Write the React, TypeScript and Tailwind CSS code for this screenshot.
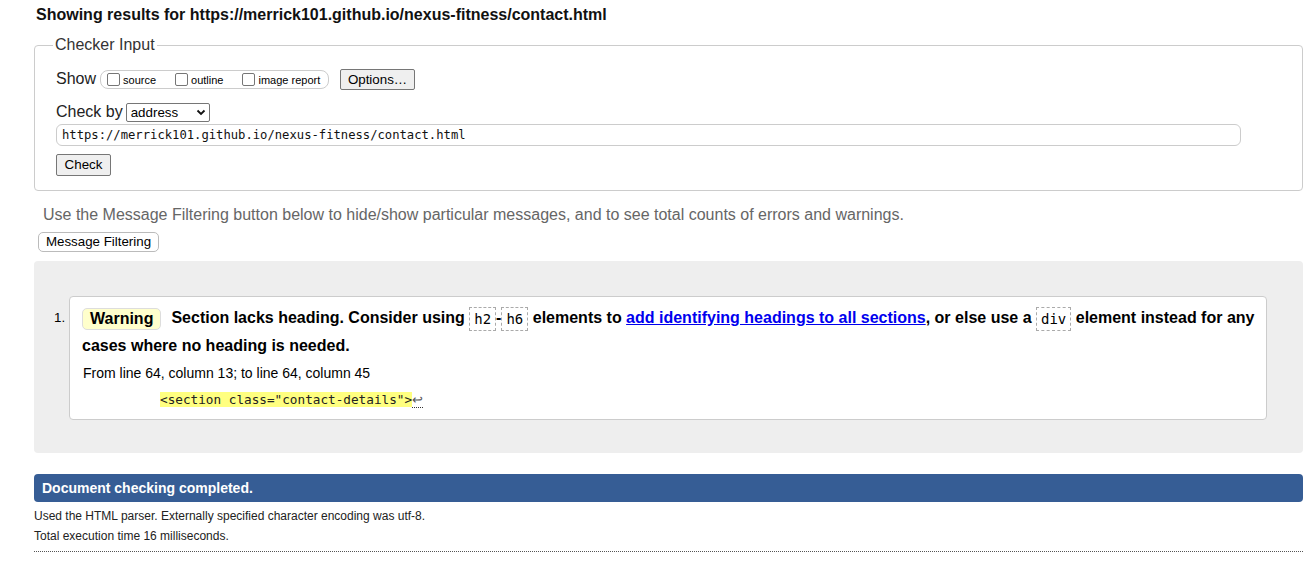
import { useState } from "react";

const sans = "font-['Liberation_Sans',Arial,sans-serif]";
const mono = "font-['DejaVu_Sans_Mono','Liberation_Mono',monospace]";

function Box({ label }: { label: string }) {
  return (
    <label className="flex items-center">
      <span className="w-[13px] h-[13px] border border-[#767676] rounded-[2px] bg-white" />
      <span className="ml-[3px] text-[11px] leading-[13px] mt-[3px]">{label}</span>
    </label>
  );
}

function Chip({ children }: { children: string }) {
  return (
    <code
      className={`${mono} inline-block font-normal text-[14px] leading-[22px] px-[4px] border border-dashed border-[#aaa] align-middle`}
    >
      {children}
    </code>
  );
}

export default function App() {
  const [url] = useState("https://merrick101.github.io/nexus-fitness/contact.html");

  return (
    <div className={`${sans} bg-white text-black min-h-[563px] pl-[34px] pr-[5px] pt-[6px]`}>
      <h2 className="pl-[2px] text-[16px] leading-[18px] font-bold text-[#111]">
        Showing results for {url}
      </h2>

      <fieldset className="mt-[12px] border border-[#ccc] rounded-[4px] px-[21px] pb-[14px]">
        <legend className="-ml-[3px] px-[2px] text-[16px] leading-[18px] text-[#333]">Checker Input</legend>

        <div className="mt-[14px] flex items-center h-[22px]">
          <span className="text-[16px] text-[#222]">Show</span>
          <div className="ml-[4px] flex items-center gap-[19px] h-[19px] w-[229px] border border-[#ccc] rounded-[8px] pl-[6px] pr-[5px]">
            <Box label="source" />
            <Box label="outline" />
            <Box label="image report" />
          </div>
          <button className="ml-[11px] h-[21px] w-[75px] bg-[#efefef] border border-[#767676] rounded-[2px] text-[13.33px] leading-[19px]">
            Options…
          </button>
        </div>

        <div className="mt-[11px] flex items-center h-[22px]">
          <span className="text-[16px] text-[#222]">Check by</span>
          <div className="ml-[3px] flex items-center justify-between w-[84px] h-[19px] border border-[#767676] rounded-[2px] pl-[4px] pr-[3px]">
            <span className="text-[13.33px] leading-[17px]">address</span>
            <svg width="10" height="10" viewBox="0 0 10 10">
              <path d="M1.5 3.5 L5 7 L8.5 3.5" fill="none" stroke="#111" strokeWidth="1.8" />
            </svg>
          </div>
        </div>

        <div
          className={`${mono} mt-[1px] w-[1185px] h-[22px] border border-[#ccc] rounded-[6px] pl-[5px] text-[12.2px] leading-[20px] text-[#111]`}
        >
          {url}
        </div>

        <button className="mt-[8px] block h-[22px] w-[55px] bg-[#efefef] border border-[#767676] rounded-[2px] text-[13.33px] leading-[20px]">
          Check
        </button>
      </fieldset>

      <p className="mt-[15px] pl-[9px] text-[16px] leading-[18px] text-[#666]">
        Use the Message Filtering button below to hide/show particular messages, and to see total counts of errors and warnings.
      </p>

      <button className="mt-[8px] ml-[4px] block h-[20px] w-[121px] bg-white border border-[#bbb] rounded-[5px] text-[13.33px] leading-[18px]">
        Message Filtering
      </button>

      <div className="mt-[9px] bg-[#eee] rounded-[4px] pt-[35px] pb-[33px] pl-[20px] pr-[36px] flex">
        <div className="w-[15px] pt-[14px] text-[13.33px] leading-[16px]">1.</div>
        <div className="flex-1 bg-white border border-[#ccc] rounded-[4px] pl-[12px] pr-[2px] pt-[7px] pb-[10px]">
          <p className="text-[16px] leading-[28px] font-bold">
            <span className="inline-block mr-[10px] px-[7px] leading-[20px] bg-[#ffffcc] border border-[#ddd] rounded-[5px] align-middle">
              Warning
            </span>
            Section lacks heading. Consider using <Chip>h2</Chip>-<Chip>h6</Chip> elements to{" "}
            <a href="#" className="text-[#0000ee] underline">
              add identifying headings to all sections
            </a>
            , or else use a <Chip>div</Chip> element instead for any cases where no heading is needed.
          </p>
          <p className="mt-[4px] pl-[1px] text-[14px] leading-[18px]">From line 64, column 13; to line 64, column 45</p>
          <p className="mt-[8px] pl-[78px] leading-[18px]">
            <code className={`${mono} text-[12.7px] bg-[#ffff80] text-[#222]`}>
              {'<section class="contact-details">'}
            </code>
            <span className="text-[13px] text-[#555] border-b border-dotted border-[#333]">↩</span>
          </p>
        </div>
      </div>

      <div className="mt-[21px] h-[28px] bg-[#365d95] rounded-[4px] pl-[8px] flex items-center text-[14px] font-bold text-white">
        Document checking completed.
      </div>
      <p className="mt-[4px] text-[12px] leading-[20px] text-[#222]">
        Used the HTML parser. Externally specified character encoding was utf-8.
      </p>
      <p className="text-[12px] leading-[20px] text-[#222]">Total execution time 16 milliseconds.</p>
      <div className="mt-[5px] border-t border-dotted border-[#555]" />
    </div>
  );
}
